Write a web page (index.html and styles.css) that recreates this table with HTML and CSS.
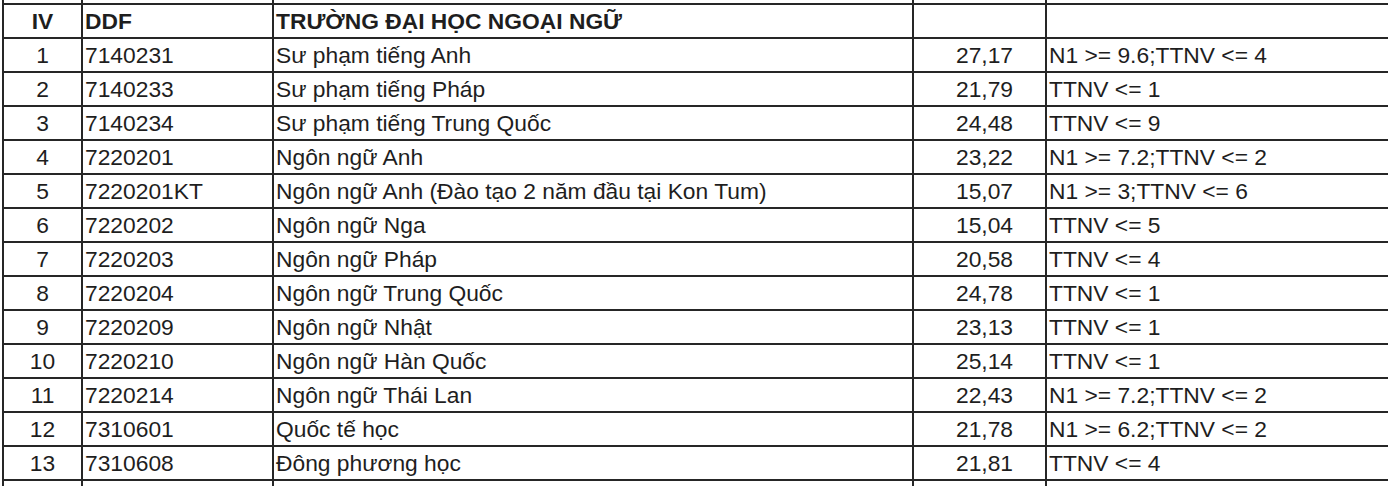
FILE: index.html
```html
<!DOCTYPE html>
<html lang="vi">
<head>
<meta charset="utf-8">
<title>Điểm chuẩn</title>
<link rel="stylesheet" href="styles.css">
</head>
<body>
<table class="grid">
  <colgroup>
    <col class="c-iv">
    <col class="c-code">
    <col class="c-name">
    <col class="c-score">
    <col class="c-cond">
  </colgroup>
  <tbody>
    <tr class="prev"><td></td><td></td><td></td><td></td><td></td></tr>
    <tr class="head">
      <td class="num">IV</td>
      <td>DDF</td>
      <td>TRƯỜNG ĐẠI HỌC NGOẠI NGỮ</td>
      <td></td>
      <td></td>
    </tr>
    <tr><td class="num">1</td><td>7140231</td><td>Sư phạm tiếng Anh</td><td class="score">27,17</td><td>N1 &gt;= 9.6;TTNV &lt;= 4</td></tr>
    <tr><td class="num">2</td><td>7140233</td><td>Sư phạm tiếng Pháp</td><td class="score">21,79</td><td>TTNV &lt;= 1</td></tr>
    <tr><td class="num">3</td><td>7140234</td><td>Sư phạm tiếng Trung Quốc</td><td class="score">24,48</td><td>TTNV &lt;= 9</td></tr>
    <tr><td class="num">4</td><td>7220201</td><td>Ngôn ngữ Anh</td><td class="score">23,22</td><td>N1 &gt;= 7.2;TTNV &lt;= 2</td></tr>
    <tr><td class="num">5</td><td>7220201KT</td><td>Ngôn ngữ Anh (Đào tạo 2 năm đầu tại Kon Tum)</td><td class="score">15,07</td><td>N1 &gt;= 3;TTNV &lt;= 6</td></tr>
    <tr><td class="num">6</td><td>7220202</td><td>Ngôn ngữ Nga</td><td class="score">15,04</td><td>TTNV &lt;= 5</td></tr>
    <tr><td class="num">7</td><td>7220203</td><td>Ngôn ngữ Pháp</td><td class="score">20,58</td><td>TTNV &lt;= 4</td></tr>
    <tr><td class="num">8</td><td>7220204</td><td>Ngôn ngữ Trung Quốc</td><td class="score">24,78</td><td>TTNV &lt;= 1</td></tr>
    <tr><td class="num">9</td><td>7220209</td><td>Ngôn ngữ Nhật</td><td class="score">23,13</td><td>TTNV &lt;= 1</td></tr>
    <tr><td class="num">10</td><td>7220210</td><td>Ngôn ngữ Hàn Quốc</td><td class="score">25,14</td><td>TTNV &lt;= 1</td></tr>
    <tr><td class="num">11</td><td>7220214</td><td>Ngôn ngữ Thái Lan</td><td class="score">22,43</td><td>N1 &gt;= 7.2;TTNV &lt;= 2</td></tr>
    <tr><td class="num">12</td><td>7310601</td><td>Quốc tế học</td><td class="score">21,78</td><td>N1 &gt;= 6.2;TTNV &lt;= 2</td></tr>
    <tr><td class="num">13</td><td>7310608</td><td>Đông phương học</td><td class="score">21,81</td><td>TTNV &lt;= 4</td></tr>
    <tr class="next"><td></td><td></td><td></td><td></td><td></td></tr>
  </tbody>
</table>
</body>
</html>
```

FILE: styles.css
```css
html, body {
  margin: 0;
  padding: 0;
  background: #ffffff;
  overflow: hidden;
}

body {
  font-family: "Liberation Sans", Arial, Helvetica, sans-serif;
  font-size: 22.8px;
  color: #1e1e1e;
}

.grid {
  border-collapse: collapse;
  table-layout: fixed;
  width: 1386px;
  margin: -31px 0 0 2px;
}

.c-iv { width: 79px; }
.c-code { width: 191px; }
.c-name { width: 640px; }
.c-score { width: 133px; }
.c-cond { width: 343px; }

.grid td {
  border: 2px solid #262626;
  height: 32px;
  padding: 0 2px 0 2px;
  white-space: nowrap;
  overflow: hidden;
  line-height: 22px;
  vertical-align: middle;
}

.grid .num {
  text-align: center;
}

.grid .score {
  text-align: center;
  padding-left: 12px;
}

.head td {
  font-weight: bold;
}
```
